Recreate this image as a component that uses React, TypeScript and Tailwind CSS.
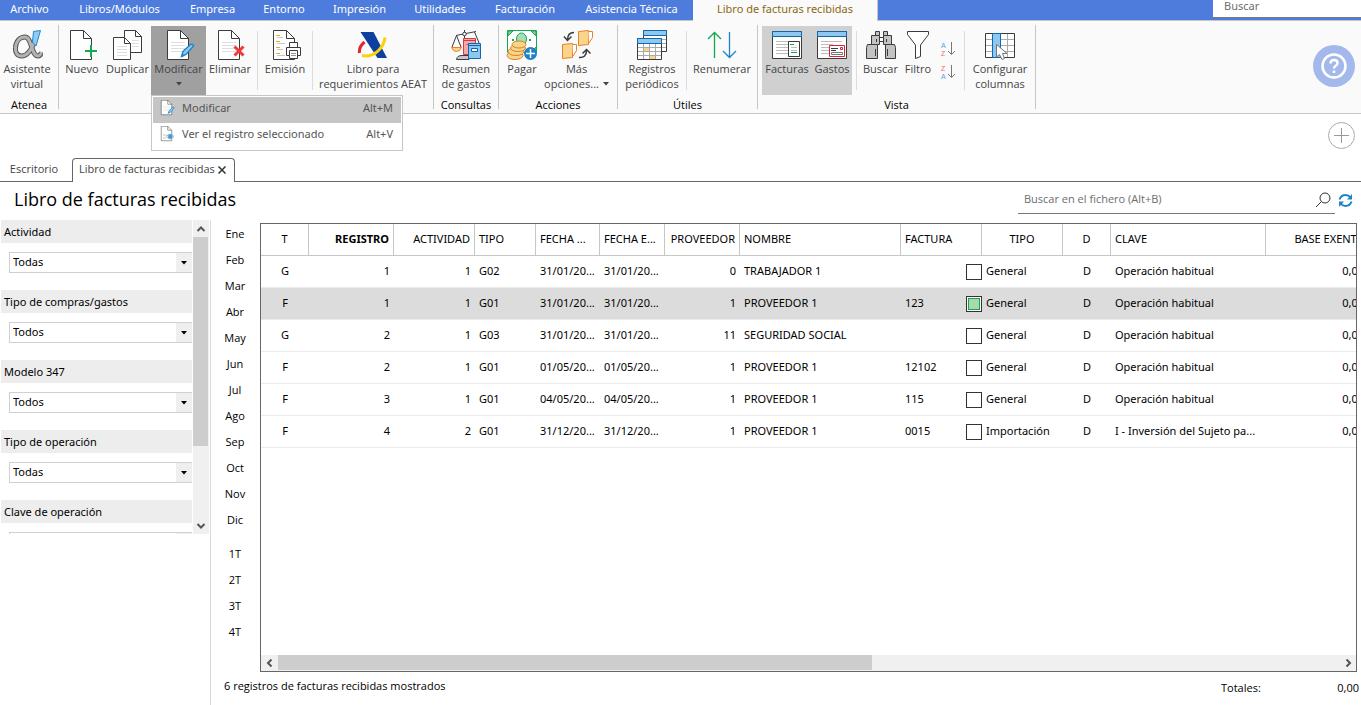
import type { ReactNode } from 'react';

const INK = '#3b3b3b';

function Icon({ children, size = 32 }: { children: ReactNode; size?: number }) {
  return (
    <svg width={size} height={size} viewBox="0 0 32 32" fill="none" className="shrink-0" aria-hidden="true">
      {children}
    </svg>
  );
}

function Sheet({ lines = true }: { lines?: boolean }) {
  return (
    <>
      <path d="M4.5 .5H17.5L25.5 8.5V29.5H4.5Z" fill="#fff" stroke={INK} />
      <path d="M17.5 .5V8.5H25.5" stroke={INK} />
      {lines && <path d="M8 12.5H22M8 15.5H22M8 18.5H22M8 21.5H22" stroke="#dedede" />}
    </>
  );
}

function Pencil() {
  return (
    <>
      <path d="M18.5 26.5L20 21.5L27.5 14.5Q30 13.5 30.5 16L23 24.5Z" fill="#92c8f0" stroke="#1e84c9" strokeWidth="1.4" />
      <path d="M18.5 26.5L20.5 24.5" stroke="#1e84c9" strokeWidth="2" />
    </>
  );
}

const AlphaIcon = () => (
  <Icon>
    <path d="M25 7C22 17 18 26 10.500 26C6 26 4 22 4.500 17.500C5 11 9 7 14 7C21 7 20 26 27 26C29 26 30 24 30.500 22" stroke="#555" strokeWidth="5" />
    <path d="M25 7C22 17 18 26 10.500 26C6 26 4 22 4.500 17.500C5 11 9 7 14 7C21 7 20 26 27 26C29 26 30 24 30.500 22" stroke="#b3b3b3" strokeWidth="3" />
    <path d="M22.500 1.500L29.500 .5L25 16L21.500 12Z" fill="#8ccbf3" stroke="#2a86c8" />
  </Icon>
);

const NewIcon = () => (
  <Icon>
    <path d="M25.500 15V8.500L17.500 .5H4.500V29.500H25.500V27" fill="#fff" stroke={INK} />
    <path d="M17.500 .5V8.500H25.500" stroke={INK} />
    <path d="M25 15V27M19 21H31" stroke="#12a84f" strokeWidth="2" />
  </Icon>
);

const CopyIcon = () => (
  <Icon>
    <path d="M12.500 .5H23.500L29.500 6.500V22.500H12.500Z" fill="#fff" stroke={INK} />
    <path d="M23.500 .5V6.500H29.500" stroke={INK} />
    <path d="M20 10.500H27M20 13.500H27M20 16.500H27" stroke="#dedede" />
    <path d="M1.500 7.500H12.500L18.500 13.500V29.500H1.500Z" fill="#fff" stroke={INK} />
    <path d="M12.500 7.500V13.500H18.500" stroke={INK} />
    <path d="M5 16.500H15M5 19.500H15M5 22.500H15M5 25.500H15" stroke="#dedede" />
  </Icon>
);

const EditIcon = ({ size }: { size?: number }) => (
  <Icon size={size}>
    <Sheet />
    <Pencil />
  </Icon>
);

const ViewIcon = ({ size }: { size?: number }) => (
  <Icon size={size}>
    <Sheet lines={false} />
    <path d="M8 18H16M8 24H14" stroke="#c8c8c8" strokeWidth="2" />
    <path d="M15 21Q22 12 30 21Q22 30 15 21Z" fill="#fff" stroke="#7db5da" strokeWidth="2" />
    <circle cx="22.500" cy="21" r="4.500" fill="#4f97cb" />
  </Icon>
);

const DeleteIcon = () => (
  <Icon>
    <Sheet />
    <path d="M20.500 16.500L29.500 25.500M29.500 16.500L20.500 25.500" stroke="#ee3a3a" strokeWidth="3" />
  </Icon>
);

const PrintIcon = () => (
  <Icon>
    <Sheet lines={false} />
    <path d="M7 5.500H11M7 11.500H11M7 17.500H11M7 23.500H11" stroke="#f0a030" />
    <path d="M8 7.500H14M8 13.500H16M8 19.500H14M8 25.500H16" stroke="#c9c9c9" />
    <path d="M20.500 12.500H28.500V17.500H20.500Z" fill="#fff" stroke={INK} />
    <path d="M17.500 17.500H31.500V25.500H17.500Z" fill="#fff" stroke={INK} />
    <path d="M20.500 20.500H28.500V28.500H20.500Z" fill="#fff" stroke={INK} />
    <path d="M22 23.500H27M22 25.500H27" stroke="#999" />
  </Icon>
);

const AeatIcon = () => (
  <Icon>
    <path d="M3.500 2H16.500L30 28H20.500Z" fill="#0c3f9e" />
    <path d="M7.500 12Q1.500 17 2.500 23" stroke="#e3272d" strokeWidth="3" />
    <path d="M5 25.500Q15 27.500 22 20Q27 15 28 7.500" stroke="#fbd20a" strokeWidth="3" />
  </Icon>
);

const BalanceIcon = () => (
  <Icon>
    <path d="M6 5.500L26 1.500M14.500 0V25M6.500 5.500L2 17M6.500 5.500L11 17M24.500 2L29.500 14" stroke={INK} />
    <circle cx="14.500" cy="4" r="1.800" fill="#fff" stroke={INK} />
    <path d="M1.500 17.500H11.500Q10 21.500 6.500 21.500Q3 21.500 1.500 17.500Z" fill="#f8d58b" stroke="#e9802a" />
    <path d="M6.500 29.500Q7 25.500 12 25.500H19V29.500Z" fill="#c8c8c8" stroke={INK} />
    <path d="M13.500 8.500H25.500V24.500H13.500Z" fill="#f3a9a9" stroke="#dc3545" />
    <path d="M13 10.500H26M16.500 14.500H24" stroke="#dc3545" />
    <path d="M18.500 13.500H30.500V28.500H18.500Z" fill="#8cc8ef" stroke="#1467ad" />
    <path d="M18 15.500H31" stroke="#1467ad" />
    <path d="M21.500 18.500H27.500V21.500H21.500Z" fill="#fff" stroke="#1467ad" />
  </Icon>
);

const PayIcon = () => (
  <Icon>
    <path d="M1.500 .5H30.500V22.500H1.500Z" fill="#fff" stroke="#12a84f" />
    <path d="M2 1H7L2 6ZM30 1H25L30 6ZM30 22H25L30 17Z" fill="#8fd0a4" stroke="#12a84f" />
    <ellipse cx="15.500" cy="9" rx="5" ry="6" fill="#a9dcb6" stroke="#12a84f" />
    <path d="M6 9h2v2h-2zM23 9h2v2h-2z" fill="#12a84f" />
    <g fill="#f8d58b" stroke="#d98324">
      <ellipse cx="9" cy="25.500" rx="8" ry="4" />
      <ellipse cx="10" cy="21.500" rx="8" ry="4" />
      <ellipse cx="12" cy="18" rx="7.500" ry="3.500" />
      <ellipse cx="13" cy="14.500" rx="7" ry="3.500" />
    </g>
    <circle cx="24.500" cy="23.500" r="6.500" fill="#1b82c6" />
    <path d="M24.500 19V28M20 23.500H29" stroke="#fff" strokeWidth="1.500" />
  </Icon>
);

const MoreIcon = () => (
  <Icon>
    <g fill="#f8d58b" stroke="#e9802a">
      <path d="M17.500 1.500L27.500 .5V14.500L17.500 15.500Z" />
      <path d="M1.500 14.500L11.500 13.500V27.500L1.500 28.500Z" />
      <path d="M27.500 1.500H31.500V7.500L28 13M11.500 14.500H15.500V20.500L12 26" fill="#fff" />
    </g>
    <path d="M13 2.500Q6.500 2.500 6.500 10M3 6.500L6.500 10.500L10.500 6.500" stroke={INK} strokeWidth="1.500" />
    <path d="M18 27.500Q25.500 28 25.500 20.500M21.500 23.500L25.500 19.500L29.500 23.500" stroke={INK} strokeWidth="1.500" />
  </Icon>
);

const CalendarIcon = () => (
  <Icon>
    <path d="M7.500 .5H30.500V21.500H7.500Z" fill="#fff" stroke={INK} />
    <path d="M7.500 .5H30.500V5.500H7.500Z" fill="#8cc8ef" stroke="#1467ad" />
    <path d="M26 9.500H30M26 13.500H30M26 17.500H30" stroke="#aaa" />
    <path d="M1.500 8.500H25.500V29.500H1.500Z" fill="#fff" stroke={INK} />
    <path d="M8 18h5v4h-5zM14 26h5v3h-5z" fill="#f8d58b" />
    <path d="M2 17.500H25M2 21.500H25M2 25.500H25M7.500 14V29M13.500 14V29M19.500 14V29" stroke="#aaa" />
    <path d="M1.500 8.500H25.500V13.500H1.500Z" fill="#8cc8ef" stroke="#1467ad" />
  </Icon>
);

const RenumberIcon = () => (
  <Icon>
    <path d="M8.500 28V2.500M2 9L8.500 2.500L15 9" stroke="#12a84f" strokeWidth="1.300" />
    <path d="M23.500 2V27.500M17 21L23.500 27.500L30 21" stroke="#1e84c9" strokeWidth="1.300" />
  </Icon>
);

function WindowBase() {
  return (
    <>
      <path d="M1.500 1.500H30.500V28.500H1.500Z" fill="#fff" stroke={INK} />
      <path d="M1.500 1.500H30.500V6.500H1.500Z" fill="#8cc8ef" stroke="#1467ad" />
      <path d="M5 11.500H26M5 14.500H17M5 17.500H17M5 20.500H17M5 23.500H17" stroke="#bcbcbc" />
    </>
  );
}

const InvoicesIcon = () => (
  <Icon>
    <WindowBase />
    <path d="M17.500 11.500H28.500V26.500H17.500Z" fill="#fff" stroke={INK} />
    <path d="M19 14.500H23M20 22.500H26" stroke="#12a84f" />
    <path d="M20 17.500H26M20 20.500H26" stroke="#bcbcbc" />
  </Icon>
);

const ExpensesIcon = () => (
  <Icon>
    <WindowBase />
    <path d="M13.500 15.500H28.500V26.500H13.500Z" fill="#fff" stroke="#e01f3a" />
    <path d="M15 18.500H22M15 20.500H20" stroke={INK} />
    <path d="M24.500 17.500H26.500V19.500H24.500Z" stroke="#e01f3a" />
    <path d="M15.500 22.500H26.500V24.500H15.500Z" stroke="#777" />
  </Icon>
);

const BinocularsIcon = () => (
  <Icon>
    <g fill="#c3c3c3" stroke={INK}>
      <path d="M10.500 1.500H14.500V5.500H10.500ZM18.500 1.500H22.500V5.500H18.500Z" />
      <path d="M14.500 7.500H18.500V11.500H14.500Z" fill="#fff" />
      <path d="M6.500 5.500H14.500V14.500H6.500ZM18.500 5.500H26.500V14.500H18.500Z" />
      <path d="M2.500 14.500H12.500V28.500H1.500V17.500ZM20.500 14.500H29.500L30.500 17.500V28.500H20.500Z" />
      <path d="M10.500 19V26M22.500 19V26M11.500 9V12M21.500 9V12" />
    </g>
  </Icon>
);

const FilterIcon = () => (
  <svg width="28" height="32" viewBox="0 0 28 32" fill="#fff" aria-hidden="true">
    <path d="M3.500 1.500H24.500V4.500L16.500 15V26.500L11.500 28.500V15L3.500 4.500Z" stroke={INK} />
  </svg>
);

function SortIcon({ top, bottom, topColor, bottomColor }: { top: string; bottom: string; topColor: string; bottomColor: string }) {
  return (
    <svg width="16" height="18" viewBox="0 0 16 18" fontFamily="'Liberation Sans', sans-serif" fontSize="7" className="overflow-visible" aria-hidden="true">
      <text x="1" y="7" fill={topColor}>{top}</text>
      <text x="1" y="15" fill={bottomColor}>{bottom}</text>
      <path d="M11.500 1V13M8 10L11.500 13.500L15 10" fill="none" stroke="#777" />
    </svg>
  );
}

const ColumnsIcon = () => (
  <Icon>
    <path d="M1.500 3.500H30.500V27.500H1.500Z" fill="#fff" stroke={INK} />
    <path d="M2 9.500H30M2 15.500H30M2 21.500H30M23.500 4V27" stroke="#aaa" />
    <path d="M8.500 3.500H16.500V27.500H8.500Z" fill="#8cc8ef" stroke="#1467ad" />
    <path d="M12.500 14.500V27L15.500 24.500L18 29.500L20.500 28.500L18.500 23.500H23Z" fill="#fff" stroke="#777" />
  </Icon>
);

const Caret = ({ className = '' }: { className?: string }) => (
  <svg width="6" height="4" viewBox="0 0 6 4" className={className} aria-hidden="true">
    <path d="M0 0H6L3 3.500Z" fill="currentColor" />
  </svg>
);

const Chevron = ({ d }: { d: string }) => (
  <svg width="10" height="10" viewBox="0 0 10 10" fill="none" stroke="#555" strokeWidth="2" aria-hidden="true">
    <path d={d} />
  </svg>
);

interface RibbonButtonProps {
  icon: ReactNode;
  lines: ReactNode[];
  width: string;
  state?: string;
}

function RibbonButton({ icon, lines, width, state = '' }: RibbonButtonProps) {
  return (
    <button type="button" className={`flex h-[69px] shrink-0 flex-col items-center pt-1 leading-[13px] whitespace-nowrap text-[#444] ${width} ${state}`}>
      {icon}
      {lines.map((line, i) => (
        <span key={i} className="flex h-[15px] items-center pb-0.5">{line}</span>
      ))}
    </button>
  );
}

function RibbonGroup({ label, children }: { label?: string; children: ReactNode }) {
  return (
    <section className="flex h-[84px] shrink-0 flex-col border-r border-[#c6c6c6]" aria-label={label}>
      <div className="flex pt-px">{children}</div>
      <div className="h-[15px] text-center leading-5 text-black">{label}</div>
    </section>
  );
}

const Divider = () => <div className="mt-[5px] h-[59px] w-px shrink-0 bg-[#dcdcdc]" />;

const menuTabs = [
  { name: 'Archivo', width: 'w-[63px] pr-1' },
  { name: 'Libros/Módulos', width: 'w-[113px]' },
  { name: 'Empresa', width: 'w-[73px]' },
  { name: 'Entorno', width: 'w-[70px]' },
  { name: 'Impresión', width: 'w-[81px]' },
  { name: 'Utilidades', width: 'w-20' },
  { name: 'Facturación', width: 'w-[90px]' },
  { name: 'Asistencia Técnica', width: 'w-[123px]' },
];

function MenuBar() {
  return (
    <nav className="flex h-5 bg-[#4d7cdc] font-['Noto_Sans',sans-serif] text-[11px]">
      {menuTabs.map((t) => (
        <button key={t.name} type="button" className={`shrink-0 pb-0.5 leading-[18px] whitespace-nowrap text-white ${t.width}`}>
          {t.name}
        </button>
      ))}
      <button type="button" className="relative z-10 -mb-px h-[21px] w-[185px] shrink-0 border-r border-[#c6c6c6] bg-[#fafafa] pb-[3px] leading-[18px] whitespace-nowrap text-[#8a6914]">
        Libro de facturas recibidas
      </button>
      <input
        aria-label="Buscar"
        placeholder="Buscar"
        className="ml-auto h-[18px] w-[148px] border-b border-[#7a7a7a] bg-white px-[11px] pb-1.5 outline-none placeholder:text-[#6d6d6d]"
      />
    </nav>
  );
}

function ModifyMenu() {
  return (
    <div role="menu" className="absolute top-[69px] left-0 z-20 w-[252px] border border-[#c6c6c6] bg-white p-px font-['Noto_Sans',sans-serif] text-[11px] text-[#555]">
      <button type="button" role="menuitem" className="flex h-[26px] w-full items-center bg-[#c5c5c5] pr-2 pb-1 pl-1.5">
        <EditIcon size={16} />
        <span className="ml-[7px]">Modificar</span>
        <span className="ml-auto">Alt+M</span>
      </button>
      <button type="button" role="menuitem" className="flex h-[26px] w-full items-center pr-2 pb-1 pl-1.5">
        <ViewIcon size={16} />
        <span className="ml-[7px]">Ver el registro seleccionado</span>
        <span className="ml-auto">Alt+V</span>
      </button>
    </div>
  );
}

function Ribbon() {
  return (
    <div className="flex h-[94px] border-y border-[#c6c6c6] bg-[#fafafa] pt-1 text-[11px]">
      <RibbonGroup label="Atenea">
        <RibbonButton icon={<AlphaIcon />} lines={['Asistente', 'virtual']} width="mr-1 w-[54px]" />
      </RibbonGroup>
      <RibbonGroup>
        <RibbonButton icon={<NewIcon />} lines={['Nuevo']} width="ml-px w-11" />
        <RibbonButton icon={<CopyIcon />} lines={['Duplicar']} width="w-[47px]" />
        <div className="relative">
          <RibbonButton icon={<EditIcon />} lines={['Modificar', <Caret />]} width="w-[55px]" state="bg-[#a0a0a0]" />
          <ModifyMenu />
        </div>
        <RibbonButton icon={<DeleteIcon />} lines={['Eliminar']} width="mr-[3px] w-12" />
        <Divider />
        <RibbonButton icon={<PrintIcon />} lines={['Emisión']} width="w-[54px]" />
        <Divider />
        <RibbonButton icon={<AeatIcon />} lines={['Libro para', 'requerimientos AEAT']} width="w-[120px]" />
      </RibbonGroup>
      <RibbonGroup label="Consultas">
        <RibbonButton icon={<BalanceIcon />} lines={['Resumen', 'de gastos']} width="w-16" />
      </RibbonGroup>
      <RibbonGroup label="Acciones">
        <RibbonButton icon={<PayIcon />} lines={['Pagar']} width="ml-px w-11" />
        <RibbonButton
          icon={<MoreIcon />}
          lines={['Más', <>opciones... <Caret className="ml-1" /></>]}
          width="mr-2 w-[65px]"
        />
      </RibbonGroup>
      <RibbonGroup label="Útiles">
        <RibbonButton icon={<CalendarIcon />} lines={['Registros', 'periódicos']} width="w-[68px]" />
        <Divider />
        <RibbonButton icon={<RenumberIcon />} lines={['Renumerar']} width="w-[70px]" />
      </RibbonGroup>
      <RibbonGroup label="Vista">
        <RibbonButton icon={<InvoicesIcon />} lines={['Facturas']} width="ml-1 w-[50px]" state="bg-[#d0d0d0]" />
        <RibbonButton icon={<ExpensesIcon />} lines={['Gastos']} width="mr-1 w-10" state="bg-[#d0d0d0]" />
        <Divider />
        <RibbonButton icon={<BinocularsIcon />} lines={['Buscar']} width="w-[47px]" />
        <RibbonButton icon={<FilterIcon />} lines={['Filtro']} width="w-7" />
        <div className="flex w-8 flex-col items-center gap-[5px] pt-[15px]">
          <button type="button" aria-label="Orden ascendente">
            <SortIcon top="A" bottom="Z" topColor="#4fa3dc" bottomColor="#ee6a6a" />
          </button>
          <button type="button" aria-label="Orden descendente">
            <SortIcon top="Z" bottom="A" topColor="#ee6a6a" bottomColor="#4fa3dc" />
          </button>
        </div>
        <Divider />
        <RibbonButton icon={<ColumnsIcon />} lines={['Configurar', 'columnas']} width="w-[70px]" />
      </RibbonGroup>
      <button type="button" aria-label="Ayuda" className="mt-5 mr-1.5 ml-auto flex size-[42px] shrink-0 items-center justify-center rounded-full bg-[#a4b9eb]">
        <svg width="26" height="26" viewBox="0 0 26 26" fill="none" stroke="#fff">
          <circle cx="13" cy="13" r="11.500" strokeWidth="2.500" />
          <path d="M9.500 10.500Q9.500 7 13 7Q16.500 7 16.500 10Q16.500 12 14.500 13Q13 14 13 15.500" strokeWidth="2.400" />
          <path d="M13 17.500V20" strokeWidth="2.500" />
        </svg>
      </button>
    </div>
  );
}

function DocumentTabs() {
  return (
    <div className="flex h-6 items-end border-b border-[#666] text-[11px] text-[#444]">
      <button type="button" className="h-6 w-[72px] pr-1">Escritorio</button>
      <div className="relative top-px flex h-6 w-[163px] items-center justify-between rounded-t border border-b-0 border-[#666] bg-white pr-2 pb-0.5 pl-1.5 whitespace-nowrap">
        <span>Libro de facturas recibidas</span>
        <button type="button" aria-label="Cerrar">
          <svg width="8" height="8" viewBox="0 0 8 8" stroke="#333" strokeWidth="1.500">
            <path d="M.5 .5L7.500 7.500M7.500 .5L.5 7.500" />
          </svg>
        </button>
      </div>
    </div>
  );
}

const filters = [
  { label: 'Actividad', value: 'Todas' },
  { label: 'Tipo de compras/gastos', value: 'Todos' },
  { label: 'Modelo 347', value: 'Todos' },
  { label: 'Tipo de operación', value: 'Todas' },
  { label: 'Clave de operación', value: 'Todas' },
];

function FilterPanel() {
  return (
    <aside className="w-[211px] shrink-0 border-r border-[#d9d9d9] pl-px font-['Noto_Sans',sans-serif] text-[11px]">
      <div className="flex h-[314px] gap-px overflow-hidden">
        <div className="w-[191px]">
          {filters.map((f, i) => (
            <div key={f.label} className="h-[70px]">
              <label htmlFor={`filtro-${i}`} className="block h-[23px] bg-[#ededed] pl-[3px] leading-[23px]">
                {f.label}
              </label>
              <div className="relative mt-[9px] ml-2">
                <select id={`filtro-${i}`} className="block h-[21px] w-full appearance-none border border-r-0 border-[#d0d0d0] bg-white pl-[3px] outline-none">
                  <option>{f.value}</option>
                </select>
                <span className="pointer-events-none absolute inset-y-px right-0 flex w-4 items-center justify-center bg-[#efefef]">
                  <Caret />
                </span>
              </div>
            </div>
          ))}
        </div>
        <div className="flex w-4 flex-col items-center bg-[#f0f0f0]">
          <button type="button" aria-label="Subir" className="flex h-[17px] items-center">
            <Chevron d="M1.500 7L5 3.500L8.500 7" />
          </button>
          <div className="mr-px h-[209px] w-[15px] bg-[#cdcdcd]" />
          <button type="button" aria-label="Bajar" className="mt-auto flex h-[17px] items-center">
            <Chevron d="M1.500 3L5 6.500L8.500 3" />
          </button>
        </div>
      </div>
    </aside>
  );
}

const months = ['Ene', 'Feb', 'Mar', 'Abr', 'May', 'Jun', 'Jul', 'Ago', 'Sep', 'Oct', 'Nov', 'Dic'];
const quarters = ['1T', '2T', '3T', '4T'];

function PeriodList() {
  return (
    <div className="flex w-[49px] shrink-0 flex-col pt-px pr-px text-[11px]">
      {months.map((m) => (
        <button key={m} type="button" className="h-[26px]">{m}</button>
      ))}
      <div className="mt-2 flex flex-col">
        {quarters.map((q) => (
          <button key={q} type="button" className="h-[26px]">{q}</button>
        ))}
      </div>
    </div>
  );
}

const columns = [
  { name: 'T', width: 48, align: 'text-center font-normal' },
  { name: 'REGISTRO', width: 85, align: 'text-right font-bold' },
  { name: 'ACTIVIDAD', width: 81, align: 'text-right font-normal' },
  { name: 'TIPO', width: 61, align: 'text-left font-normal' },
  { name: 'FECHA ...', width: 64, align: 'text-left font-normal' },
  { name: 'FECHA E...', width: 65, align: 'text-left font-normal' },
  { name: 'PROVEEDOR', width: 75, align: 'text-right font-normal' },
  { name: 'NOMBRE', width: 161, align: 'text-left font-normal' },
  { name: 'FACTURA', width: 81, align: 'text-left font-normal' },
  { name: 'TIPO', width: 81, align: 'text-center font-normal' },
  { name: 'D', width: 48, align: 'text-center font-normal' },
  { name: 'CLAVE', width: 155, align: 'text-left font-normal' },
  { name: 'BASE EXENTA', width: 102, align: 'text-right font-normal' },
];

const rows = [
  { t: 'G', reg: 1, act: 1, tipo: 'G02', fecha: '31/01/20...', prov: 0, nombre: 'TRABAJADOR 1', factura: '', clase: 'General', clave: 'Operación habitual' },
  { t: 'F', reg: 1, act: 1, tipo: 'G01', fecha: '31/01/20...', prov: 1, nombre: 'PROVEEDOR 1', factura: '123', clase: 'General', clave: 'Operación habitual', selected: true },
  { t: 'G', reg: 2, act: 1, tipo: 'G03', fecha: '31/01/20...', prov: 11, nombre: 'SEGURIDAD SOCIAL', factura: '', clase: 'General', clave: 'Operación habitual' },
  { t: 'F', reg: 2, act: 1, tipo: 'G01', fecha: '01/05/20...', prov: 1, nombre: 'PROVEEDOR 1', factura: '12102', clase: 'General', clave: 'Operación habitual' },
  { t: 'F', reg: 3, act: 1, tipo: 'G01', fecha: '04/05/20...', prov: 1, nombre: 'PROVEEDOR 1', factura: '115', clase: 'General', clave: 'Operación habitual' },
  { t: 'F', reg: 4, act: 2, tipo: 'G01', fecha: '31/12/20...', prov: 1, nombre: 'PROVEEDOR 1', factura: '0015', clase: 'Importación', clave: 'I - Inversión del Sujeto pa...' },
];

function InvoiceTable() {
  return (
    <table className="w-[1107px] table-fixed border-separate border-spacing-0 font-['Noto_Sans',sans-serif] text-[11px] whitespace-nowrap">
      <colgroup>
        {columns.map((c, i) => (
          <col key={i} style={{ width: c.width }} />
        ))}
      </colgroup>
      <thead>
        <tr className="h-8">
          {columns.map((c, i) => (
            <th key={i} className={`border-r border-b border-[#c6c6c6] px-1 py-0 ${c.align}`}>{c.name}</th>
          ))}
        </tr>
      </thead>
      <tbody>
        {rows.map((r, i) => (
          <tr key={i} className={`h-8 *:border-b *:border-[#ebebeb] *:px-1 *:py-0 ${r.selected ? 'bg-[#dcdcdc]' : ''}`}>
            <td className="text-center">{r.t}</td>
            <td className="text-right">{r.reg}</td>
            <td className="text-right">{r.act}</td>
            <td>{r.tipo}</td>
            <td>{r.fecha}</td>
            <td>{r.fecha}</td>
            <td className="text-right">{r.prov}</td>
            <td>{r.nombre}</td>
            <td>{r.factura}</td>
            <td>
              <label className="-ml-5 flex items-center gap-1">
                <input
                  type="checkbox"
                  defaultChecked={r.selected}
                  className="size-4 shrink-0 appearance-none border border-[#333] bg-white checked:bg-[#a9d8b0] checked:shadow-[inset_0_0_0_1px_#fff,inset_0_0_0_2px_#12a84f]"
                />
                {r.clase}
              </label>
            </td>
            <td className="text-center">D</td>
            <td>{r.clave}</td>
            <td className="text-right">0,00</td>
          </tr>
        ))}
      </tbody>
    </table>
  );
}

function Grid() {
  return (
    <div className="mt-[3px] mr-1 flex flex-1 flex-col overflow-hidden border border-[#666] bg-white">
      <div className="flex-1 overflow-hidden">
        <InvoiceTable />
      </div>
      <div className="flex h-4 items-center bg-[#f0f0f0]">
        <button type="button" aria-label="Izquierda" className="flex w-[17px] justify-center">
          <Chevron d="M6.500 1.500L3 5L6.500 8.500" />
        </button>
        <div className="h-4 flex-1">
          <div className="h-[15px] w-[56%] bg-[#cdcdcd]" />
        </div>
        <button type="button" aria-label="Derecha" className="flex w-[17px] justify-center">
          <Chevron d="M3.500 1.500L7 5L3.500 8.500" />
        </button>
      </div>
    </div>
  );
}

function TitleRow() {
  return (
    <header className="flex h-[38px] justify-between pr-2 pl-3.5">
      <h1 className="text-lg leading-[34px]">Libro de facturas recibidas</h1>
      <div className="flex items-start gap-[3px]">
        <div className="mt-1 flex h-7 w-[317px] items-center border-b border-[#777] pr-1 pl-1.5">
          <input
            aria-label="Buscar en el fichero"
            placeholder="Buscar en el fichero (Alt+B)"
            className="min-w-0 flex-1 bg-transparent text-[11px] outline-none placeholder:text-[#6d6d6d]"
          />
          <svg width="16" height="16" viewBox="0 0 16 16" fill="none" stroke="#333" aria-hidden="true">
            <circle cx="10" cy="6" r="5" />
            <path d="M6.500 9.500L1 15" />
          </svg>
        </div>
        <button type="button" aria-label="Actualizar" className="mt-[11px]">
          <svg width="15" height="15" viewBox="0 0 15 15" fill="none" stroke="#1e84c9" strokeWidth="2">
            <path d="M1.500 6.500Q3 2 7.500 2Q10.500 2 12.500 4.500M13.500 8.500Q12 13 7.500 13Q4.500 13 2.500 10.500" />
            <path d="M14 1V6.500H9ZM1 14V8.500H6Z" fill="#1e84c9" stroke="none" />
          </svg>
        </button>
      </div>
    </header>
  );
}

export default function App() {
  return (
    <div className="flex min-h-screen flex-col overflow-hidden bg-white font-['Open_Sans','Noto_Sans',sans-serif] text-black">
      <MenuBar />
      <Ribbon />
      <div className="flex h-11 items-center justify-end pr-1.5 pb-0.5">
        <button type="button" aria-label="Añadir pestaña" className="flex size-[27px] items-center justify-center rounded-full border border-[#aaa]">
          <svg width="15" height="15" viewBox="0 0 15 15" stroke="#999">
            <path d="M7.500 0V15M0 7.500H15" />
          </svg>
        </button>
      </div>
      <DocumentTabs />
      <TitleRow />
      <main className="flex flex-1">
        <FilterPanel />
        <div className="flex min-w-0 flex-1 flex-col">
          <div className="flex flex-1">
            <PeriodList />
            <Grid />
          </div>
          <footer className="flex h-[33px] justify-between pr-0.5 pl-[13px] text-[11px] leading-[28px]">
            <span>6 registros de facturas recibidas mostrados</span>
            <span className="flex w-[138px] justify-between leading-[32px]">
              <span>Totales:</span>
              <span>0,00</span>
            </span>
          </footer>
        </div>
      </main>
    </div>
  );
}
